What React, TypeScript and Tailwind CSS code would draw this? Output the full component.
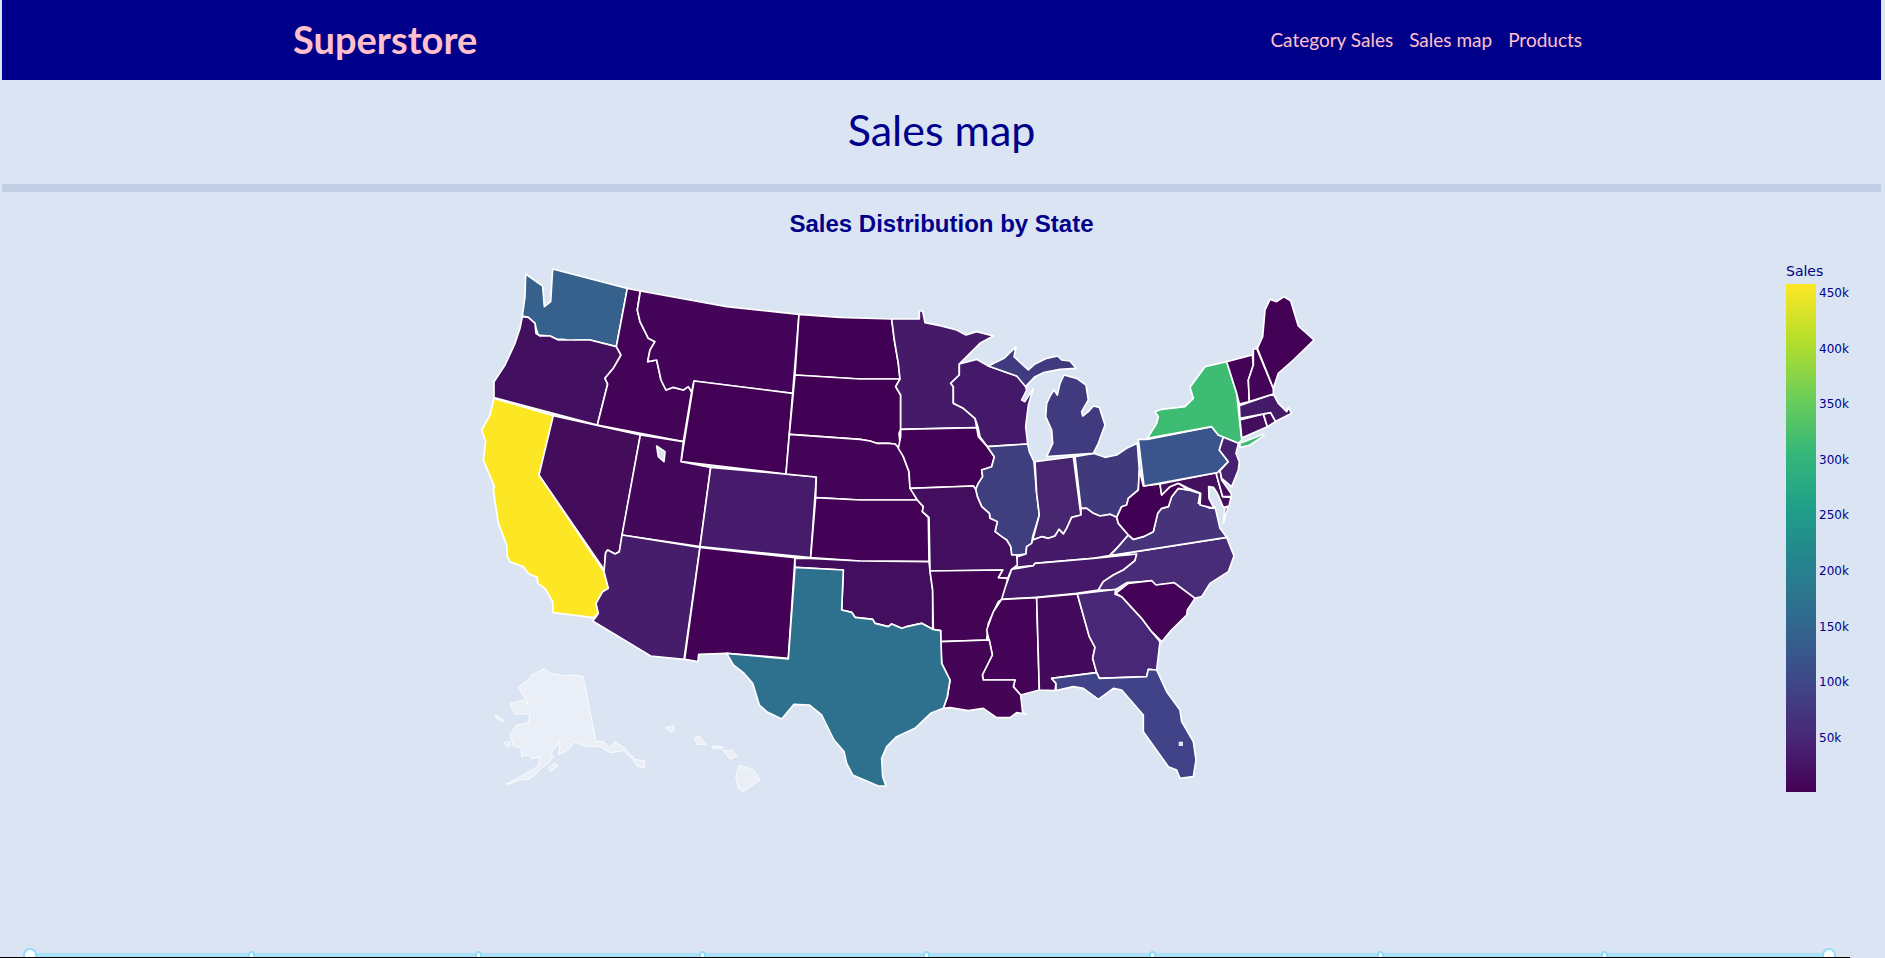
type Shape = { fill: string; points: string };

const west: Shape[] = [
  { fill: "#36618d", points: "197,42 248,78 253,140 272,125 278,27 502,85 469,260 390,240 350,240 330,243 310,238 290,238 270,228 235,225 228,205 225,190 205,172 187,168 195,110" },
  { fill: "#42105f", points: "187,170 205,172 225,190 228,220 240,228 270,228 295,240 350,240 390,240 469,260 483,285 460,325 435,355 443,372 412,495 102,413 102,365 135,315 165,250 180,205" },
  { fill: "#430457", points: "502,85 541,93 532,150 540,185 565,235 585,245 570,270 563,305 590,300 603,360 618,390 640,382 670,390 685,380 695,395 670,545 412,495 443,372 435,355 460,325 483,285 469,260" },
  { fill: "#43045a", points: "541,93 800,140 1017,163 998,400 702,363 695,395 685,380 670,390 640,382 618,390 603,360 590,300 563,305 570,270 585,245 565,235 540,185 532,150" },
  { fill: "#420154", points: "702,363 998,400 978,642 663,605" },
  { fill: "#fde725", points: "102,415 280,467 237,645 432,935 445,985 428,995 408,1030 415,1060 400,1073 280,1058 278,1025 255,985 233,970 232,952 207,942 190,920 150,905 142,890 140,855 115,790 100,690 103,680 70,600 77,545 65,510 90,465" },
  { fill: "#430d5b", points: "280,467 541,525 478,875 465,882 443,870 437,878 433,930 237,645" },
  { fill: "#44085b", points: "541,525 670,545 663,605 752,622 720,860 486,825" },
  { fill: "#dae4f2", points: "590,558 615,575 612,605 595,590" },
  { fill: "#461b6b", points: "752,622 1069,651 1052,893 720,860" },
  { fill: "#461d6b", points: "486,825 720,862 672,1198 572,1188 398,1083 408,1070 415,1060 408,1030 428,995 445,985 432,935 437,878 443,870 465,882 478,875" },
  { fill: "#440256", points: "720,862 1005,893 985,1195 800,1180 716,1183 714,1205 674,1198" },
];

const east: Shape[] = [
  { fill: "#410054", points: "-183,103 -60,112 95,117 103,180 115,250 120,297 0,297 -195,285" },
  { fill: "#410054", points: "-195,285 0,297 120,297 107,320 122,345 122,448 117,460 122,510 105,492 85,490 50,490 30,483 0,478 -212,463" },
  { fill: "#440559", points: "-212,463 0,478 30,483 50,490 85,490 105,492 122,510 130,530 147,575 150,620 172,660 0,660 -133,653 -131,591 -222,582" },
  { fill: "#440256", points: "-133,653 0,660 172,660 190,680 187,695 205,712 207,845 0,843 -148,833" },
  { fill: "#430e5e", points: "-195,835 -148,835 0,843 207,845 210,873 218,930 218,1048 185,1030 140,1040 125,1045 95,1032 85,1040 45,1030 38,1018 -15,1012 -25,997 -55,990 -50,870 -195,862" },
  { fill: "#451a68", points: "95,117 178,117 178,93 188,93 195,128 240,137 290,150 318,165 350,155 400,168 360,190 305,245 298,252 298,285 272,310 280,320 280,370 310,385 345,415 350,443 122,448 122,345 107,320 120,297 115,250 103,180" },
  { fill: "#45196a", points: "298,252 350,238 385,258 470,288 490,300 500,330 485,360 495,365 520,325 505,375 497,440 503,492 382,500 360,470 355,445 345,415 310,385 280,370 280,320 272,310 298,285" },
  { fill: "#440256", points: "122,448 350,443 355,470 382,500 403,530 395,560 365,570 368,590 355,610 347,628 340,618 150,625 147,575 130,530 115,505 122,470" },
  { fill: "#3f3f80", points: "382,500 503,492 508,515 522,545 530,640 538,705 518,770 515,790 500,800 498,822 470,825 455,825 452,800 440,780 425,770 405,755 412,725 390,715 388,700 365,680 352,650 347,628 355,610 368,590 365,570 395,560 403,530" },
  { fill: "#47256f", points: "525,545 640,530 660,685 663,705 635,712 620,745 610,762 597,748 585,768 565,775 545,770 518,780 538,705 530,640" },
  { fill: "#403a7d", points: "645,530 700,520 735,532 770,525 800,505 832,490 838,570 835,630 805,655 800,675 785,680 770,712 750,703 720,708 700,700 680,685 663,685" },
  { fill: "#403b7e", points: "560,530 578,490 575,450 557,410 560,370 572,345 582,330 592,345 600,310 612,285 650,295 678,315 685,360 665,395 668,408 685,395 700,378 718,382 735,435 715,490 700,520" },
  { fill: "#403b7e", points: "385,258 432,235 468,200 462,230 505,270 525,252 560,235 593,228 605,240 630,243 648,265 600,268 550,278 525,290 497,320 470,288" },
  { fill: "#451a68", points: "518,780 545,770 565,775 585,768 597,748 610,762 620,745 635,712 663,705 663,685 680,685 700,700 720,708 750,703 770,712 775,730 805,765 775,800 748,827 700,835 525,850 520,857 465,862 472,830 498,822 500,800 515,790" },
  { fill: "#440e5e", points: "150,625 340,618 347,628 352,650 365,680 388,700 390,715 412,725 405,755 425,770 440,780 452,800 455,825 470,825 472,855 455,868 443,895 415,893 428,870 210,873 207,712 187,695 190,680 172,660" },
  { fill: "#440456", points: "210,873 428,870 415,893 443,895 430,955 415,965 385,1030 380,1080 242,1085 242,1052 220,1050 218,930" },
  { fill: "#451869", points: "455,868 520,857 525,850 700,835 830,822 825,842 790,870 760,885 730,905 715,930 650,940 530,952 425,958 435,925" },
  { fill: "#482c78", points: "750,827 1100,772 1122,828 1105,875 1050,910 1025,950 1005,955 945,910 885,915 875,903 800,908 765,930 715,930 730,905 760,885 790,870 825,842 830,822" },
  { fill: "#463379", points: "750,827 775,800 805,765 820,778 850,770 880,755 893,700 905,685 925,680 935,650 955,625 985,630 1020,640 1015,670 1050,685 1065,680 1080,745 1100,772" },
  { fill: "#463379", points: "1090,730 1095,685 1105,680" },
  { fill: "#410054", points: "770,712 785,680 800,675 805,655 835,630 838,570 850,618 900,612 905,645 930,620 955,610 985,630 955,625 935,650 925,680 905,685 893,700 880,755 850,770 820,778 805,765 775,730" },
  { fill: "#440f5f", points: "900,612 1068,578 1088,650 1113,652 1107,678 1090,682 1072,640 1060,622 1046,620 1047,655 1062,685 1020,675 1022,640 985,625 955,610 930,620 905,645" },
  { fill: "#440d5e", points: "1068,578 1080,572 1085,600 1113,640 1115,650 1088,650" },
  { fill: "#3a548c", points: "835,478 862,478 1055,440 1075,465 1090,470 1078,510 1105,545 1072,578 852,618" },
  { fill: "#3fbc73", points: "862,475 890,430 895,410 885,395 905,388 975,380 1000,355 990,322 1035,260 1100,245 1130,340 1145,480 1135,490 1075,465 1055,440" },
  { fill: "#3fbc73", points: "1140,490 1210,463 1212,467 1170,495 1140,503" },
  { fill: "#46216f", points: "1090,472 1135,490 1128,520 1138,545 1135,570 1115,620 1085,595 1080,572 1105,545 1078,510" },
  { fill: "#440d5e", points: "1140,420 1210,402 1222,440 1150,472 1145,470" },
  { fill: "#440d5e", points: "1210,402 1232,398 1247,425 1222,440" },
  { fill: "#451a68", points: "1138,377 1240,342 1255,370 1280,395 1285,382 1295,400 1255,420 1247,425 1232,398 1140,415" },
  { fill: "#440357", points: "1100,245 1177,225 1180,255 1165,300 1168,365 1138,372 1130,340" },
  { fill: "#440357", points: "1180,208 1190,205 1240,325 1240,342 1168,365 1165,300 1180,255" },
  { fill: "#420154", points: "1192,205 1208,170 1215,90 1230,58 1250,65 1272,50 1292,62 1315,138 1362,180 1300,240 1255,280 1240,325" },
];

const south: Shape[] = [
  { fill: "#2d718e", points: "1005,22 1150,30 1145,150 1175,157 1185,172 1238,178 1245,190 1285,200 1295,192 1325,205 1340,200 1385,190 1418,208 1442,212 1445,310 1470,360 1462,410 1450,445 1412,460 1365,505 1310,530 1280,560 1265,595 1268,650 1278,678 1255,678 1178,645 1160,610 1152,575 1122,540 1085,465 1048,435 1002,433 965,477 920,455 898,435 878,370 850,338 820,315 800,280 985,297" },
];

const outlying: string[] = [
  "255,326 270,340 310,347 345,345 370,350 408,545 430,545 450,565 465,545 495,565 525,598 552,602 555,625 530,617 520,600 490,572 450,578 420,560 375,558 340,545 330,565 295,585 300,545 272,578 280,590 270,605 245,625 225,645 205,658 180,660 150,672 138,672 195,642 235,618 238,590 215,597 205,585 185,590 185,565 160,558 150,525 170,495 205,488 210,462 165,462 150,432 190,420 205,432 175,380 200,365 215,345",
  "105,465 120,472 133,482 125,485 107,473",
  "132,548 148,545 152,555 142,560",
  "265,622 285,610 293,617 272,635",
  "618,503 640,496 642,510 635,517",
  "702,535 717,527 738,553 712,553",
  "757,558 788,560 788,567 758,565",
  "790,572 815,570 832,587 810,597",
  "838,615 880,630 900,660 850,695 835,685 827,648",
];

const southEast: Shape[] = [
  { fill: "#440357", points: "155,118 260,113 268,390 212,405 190,380 195,360 100,360 97,345 127,285 110,210 130,155" },
  { fill: "#440557", points: "-28,245 118,240 127,285 97,345 100,360 195,360 190,380 212,405 218,458 228,462 200,458 180,473 140,473 100,445 55,452 0,443 -20,445 -8,410 0,360 -25,310" },
  { fill: "#440b5c", points: "260,113 382,102 418,230 435,262 428,295 440,338 305,355 318,370 315,392 268,390" },
  { fill: "#482876", points: "382,102 497,88 495,103 515,110 575,175 605,215 630,245 620,330 595,328 590,350 448,355 440,338 428,295 435,262 418,230" },
  { fill: "#440357", points: "497,100 535,70 605,62 618,75 672,68 735,115 712,150 710,165 660,215 635,245 605,215 575,175 515,110" },
  { fill: "#404387", points: "305,355 440,338 448,355 590,350 595,328 620,330 650,395 690,450 695,485 730,545 738,600 730,650 690,655 680,630 655,620 580,515 580,465 515,390 490,385 445,418 400,385 370,380 318,392 318,370" },
];

const ticks = ["450k", "400k", "350k", "300k", "250k", "200k", "150k", "100k", "50k"];

const marks = [
  "left-[246px]",
  "left-[473px]",
  "left-[697px]",
  "left-[921px]",
  "left-[1147px]",
  "left-[1375px]",
  "left-[1599px]",
];

function States({ shapes, transform }: { shapes: Shape[]; transform?: string }) {
  return (
    <g transform={transform}>
      {shapes.map((s, i) => (
        <polygon key={i} points={s.points} fill={s.fill} stroke="#fff" strokeWidth={5} strokeLinejoin="round" />
      ))}
    </g>
  );
}

function SalesMap() {
  return (
    <svg viewBox="0 0 2640 1620" className="h-[540px] w-[880px] shrink-0">
      <States shapes={west} />
      <States shapes={east} transform="translate(1200 60)" />
      <States shapes={southEast} transform="translate(1470 900)" />
      <States shapes={south} transform="translate(0 900)" />
      <g transform="translate(0 900)">
        {outlying.map((p, i) => (
          <polygon key={i} points={p} fill="#e9eef7" stroke="#fff" strokeWidth={2.5} strokeLinejoin="round" />
        ))}
      </g>
      {/* Lake Okeechobee */}
      <rect x={2156} y={1445} width={13} height={13} fill="#dae4f2" />
    </svg>
  );
}

function ColorBar() {
  return (
    <div className="font-['DejaVu_Sans',sans-serif] text-[12px] text-[#00008b]">
      <div className="mt-[3px] mb-[5px] h-4 text-[14px] leading-4">Sales</div>
      <div className="flex">
        <div className="h-[508px] w-[30px] shrink-0 bg-[linear-gradient(to_top,#440154,#482878,#3e4989,#31688e,#26828e,#1f9e89,#35b779,#6ece58,#b5de2b,#fde725)]" />
        <div className="pt-px pl-[3px]">
          {ticks.map((t) => (
            <div key={t} className="h-[55.6px] leading-4">
              {t}
            </div>
          ))}
        </div>
      </div>
    </div>
  );
}

function Slider() {
  return (
    <div className="mt-auto shrink-0">
      <div className="relative h-[9px] overflow-hidden">
        <div className="absolute bottom-0 left-[28px] h-[4px] w-[1799px] bg-[#abe2fb]" />
        {marks.map((m) => (
          <span key={m} className={`absolute top-[3px] h-[10px] w-[7px] rounded-full border-2 border-[#8fdcfb] bg-white ${m}`} />
        ))}
        <span className="absolute top-0 left-[21px] h-[16px] w-[14px] rounded-full border-2 border-[#8fdcfb] bg-white" />
        <span className="absolute top-0 left-[1820px] h-[16px] w-[14px] rounded-full border-2 border-[#8fdcfb] bg-white" />
      </div>
      <div className="-ml-[2px] h-px w-[1850px] bg-black" />
    </div>
  );
}

export default function App() {
  return (
    <div className="flex h-screen flex-col overflow-hidden bg-[#dae4f2] pr-[4px] pl-[2px] font-['Lato','Noto_Sans',sans-serif]">
      <header className="flex h-20 shrink-0 items-center bg-[#00008b] pr-[299px] pl-[291px] text-[#ffc0cb]">
        <a className="pb-[2px] text-[38px] font-bold">Superstore</a>
        <nav className="ml-auto flex gap-4 text-[19px]">
          <a>Category Sales</a>
          <a>Sales map</a>
          <a>Products</a>
        </nav>
      </header>

      <h1 className="flex h-[104px] shrink-0 items-center justify-center pb-[4px] text-[43px] font-normal text-[#00008b]">Sales map</h1>
      <div className="h-2 shrink-0 bg-[#c2cee4]" />

      <div className="flex h-[68px] shrink-0 items-center justify-center pb-[5px] font-['Liberation_Sans',sans-serif] text-[24px] font-bold text-[#00008b]">
        Sales Distribution by State
      </div>

      <div className="flex shrink-0 pl-[458px]">
        <SalesMap />
        <div className="ml-[446px]">
          <ColorBar />
        </div>
      </div>

      <Slider />
    </div>
  );
}
